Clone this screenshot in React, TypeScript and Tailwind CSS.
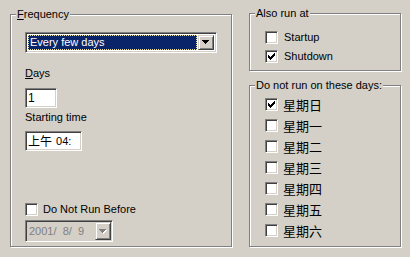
import React from "react";

// Win2000-style scheduler "Frequency" tab
const sunken =
  "border border-t-[#808080] border-l-[#808080] border-b-white border-r-white shadow-[inset_1px_1px_0_#404040,inset_-1px_-1px_0_#d4d0c8]";
const raised =
  "border border-t-[#d4d0c8] border-l-[#d4d0c8] border-b-[#404040] border-r-[#404040] shadow-[inset_1px_1px_0_#fff,inset_-1px_-1px_0_#808080]";

function Arrow({ disabled }: { disabled?: boolean }) {
  const fill = disabled ? "#808080" : "#000";
  return (
    <svg width="8" height="5" viewBox="0 0 8 5" shapeRendering="crispEdges">
      {disabled && (
        <g fill="#fff">
          <rect x="1" y="1" width="7" height="1" />
          <rect x="2" y="2" width="5" height="1" />
          <rect x="3" y="3" width="3" height="1" />
          <rect x="4" y="4" width="1" height="1" />
        </g>
      )}
      <g fill={fill}>
        <rect x="0" y="0" width="7" height="1" />
        <rect x="1" y="1" width="5" height="1" />
        <rect x="2" y="2" width="3" height="1" />
        <rect x="3" y="3" width="1" height="1" />
      </g>
    </svg>
  );
}

function DropBtn({ disabled }: { disabled?: boolean }) {
  return (
    <div className={`flex h-full w-[16px] shrink-0 items-center justify-center bg-[#d4d0c8] ${raised}`}>
      <Arrow disabled={disabled} />
    </div>
  );
}

function Check({ checked }: { checked?: boolean }) {
  return (
    <span className={`flex h-[13px] w-[13px] shrink-0 items-center justify-center bg-white ${sunken}`}>
      {checked && (
        <svg width="7" height="7" viewBox="0 0 7 7" shapeRendering="crispEdges">
          {[2, 3, 4, 3, 2, 1, 0].map((y, x) => (
            <rect key={x} x={x} y={y} width="1" height="3" fill="#000" />
          ))}
        </svg>
      )}
    </span>
  );
}

function Group({ label, className, children }: { label: React.ReactNode; className: string; children: React.ReactNode }) {
  return (
    <div className={`relative border border-[#808080] shadow-[inset_1px_1px_0_#fff,1px_1px_0_#fff] ${className}`}>
      <span className="absolute -top-[7px] left-[5px] bg-[#d4d0c8] px-[1px] leading-[13px]">{label}</span>
      {children}
    </div>
  );
}

const cjk = "font-['Noto_Sans_CJK_TC','Noto_Sans_CJK_SC',sans-serif]";

export default function App() {
  const days = ["星期日", "星期一", "星期二", "星期三", "星期四", "星期五", "星期六"];

  return (
    <div className="flex h-[257px] w-[410px] gap-[17px] bg-[#d4d0c8] pl-[10px] font-['Liberation_Sans',Arial,sans-serif] text-[11px] leading-[13px] text-black">
      <Group
        label={
          <>
            <span className="underline">F</span>requency
          </>
        }
        className="mt-[14px] h-[233px] w-[222px] pl-[14px] pt-[17px]"
      >
        <div className="flex flex-col items-start">
          <div className={`flex h-[21px] w-[192px] bg-white ${sunken} p-[2px]`}>
            <div className="mr-[1px] flex flex-1 items-center border border-dotted border-[#e8e4b0] bg-[#0a246a] pl-[1px] text-white">
              Every few days
            </div>
            <DropBtn />
          </div>

          <div className="mt-[14px] h-[13px]">
            <span className="underline">D</span>ays
          </div>
          <div className={`mt-[8px] flex h-[20px] w-[32px] items-center bg-white pl-[2px] ${sunken} text-[12px]`}>1</div>

          <div className="mt-[3px] h-[13px]">Starting time</div>
          <div className={`mt-[7px] flex h-[20px] w-[57px] items-center bg-white pl-[2px] ${sunken}`}>
            <span className={`${cjk} text-[12px] leading-[14px]`}>上午</span>
            <span className="ml-[4px]">04:</span>
          </div>

          <div className="mt-[52px] flex items-center gap-[5px]">
            <Check />
            <span>Do Not Run Before</span>
          </div>
          <div className={`mt-[4px] flex h-[22px] w-[88px] bg-[#d4d0c8] ${sunken} p-[1px]`}>
            <div className="flex flex-1 items-center pl-[2px] text-[#808080]">2001/&nbsp;&nbsp;8/&nbsp;&nbsp;9</div>
            <DropBtn disabled />
          </div>
        </div>
      </Group>

      <div className="mt-[13px] flex w-[152px] flex-col gap-[14px]">
        <Group label="Also run at" className="flex h-[58px] flex-col gap-[6px] pl-[15px] pt-[17px]">
          <div className="flex items-center gap-[6px]">
            <Check />
            <span>Startup</span>
          </div>
          <div className="flex items-center gap-[6px]">
            <Check checked />
            <span>Shutdown</span>
          </div>
        </Group>

        <Group label="Do not run on these days:" className="flex h-[162px] flex-col gap-[8px] pl-[15px] pt-[12px]">
          {days.map((d, i) => (
            <div key={d} className="flex items-center gap-[5px]">
              <Check checked={i === 0} />
              <span className={`${cjk} text-[13px] leading-[13px]`}>{d}</span>
            </div>
          ))}
        </Group>
      </div>
    </div>
  );
}
